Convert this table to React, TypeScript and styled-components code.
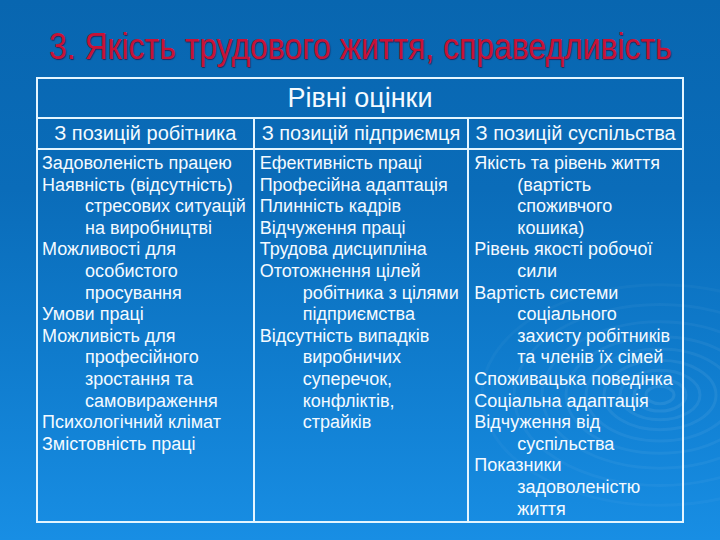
import React from 'react'
import styled, { createGlobalStyle } from 'styled-components'

const GlobalStyle = createGlobalStyle`
  html, body {
    margin: 0;
    padding: 0;
  }
  body {
    width: 720px;
    height: 540px;
    overflow: hidden;
    font-family: 'Liberation Sans', Arial, sans-serif;
  }
`

const Slide = styled.div`
  position: relative;
  width: 720px;
  height: 540px;
  display: flex;
  flex-direction: column;
  align-items: center;
  overflow: hidden;
  background: linear-gradient(180deg, #0866b0 0%, #0a6cb9 35%, #0f7bcc 65%, #188ee4 100%);
`

const Ripples = styled.svg`
  position: absolute;
  left: 0;
  top: 0;
  width: 720px;
  height: 540px;
  pointer-events: none;
`

// no narrow face is installed, so the title is squeezed to Arial Narrow's width
const Title = styled.h1`
  position: relative;
  margin: 29px 0 0;
  font-weight: normal;
  font-size: 36px;
  line-height: 36px;
  color: #c81236;
  text-shadow: 1px 1px 1px rgba(50, 0, 40, 0.6);
  white-space: nowrap;
  transform: scaleX(0.886);
`

const Table = styled.div`
  position: relative;
  box-sizing: border-box;
  width: 648px;
  height: 446px;
  margin-top: 12px;
  border: 2px solid #e4f5ff;
  display: grid;
  grid-template-columns: 1fr 1fr 1fr;
  grid-template-rows: 40px 31px 1fr;
  color: #f4faff;
`

const Caption = styled.div`
  grid-column: 1 / span 3;
  border-bottom: 2px solid #e4f5ff;
  text-align: center;
  font-size: 27px;
  line-height: 38px;
`

const HeadCell = styled.div<{ first?: boolean }>`
  border-bottom: 2px solid #e4f5ff;
  border-left: ${({ first }) => (first ? 'none' : '2px solid #e4f5ff')};
  text-align: center;
  font-size: 20px;
  line-height: 29px;
  white-space: nowrap;
`

const BodyCell = styled.div<{ first?: boolean }>`
  border-left: ${({ first }) => (first ? 'none' : '2px solid #e4f5ff')};
  padding: 3px 0 0 ${({ first }) => (first ? '4px' : '5px')};
  font-size: 18px;
  line-height: 21.6px;
`

const Line = styled.div<{ indent?: boolean }>`
  padding-left: ${({ indent }) => (indent ? '43px' : '0')};
  white-space: nowrap;
`

const COLUMNS: { title: string; items: string[][] }[] = [
  {
    title: 'З позицій робітника',
    items: [
      ['Задоволеність працею'],
      ['Наявність (відсутність)', 'стресових ситуацій', 'на виробництві'],
      ['Можливості для', 'особистого', 'просування'],
      ['Умови праці'],
      ['Можливість для', 'професійного', 'зростання та', 'самовираження'],
      ['Психологічний клімат'],
      ['Змістовність праці'],
    ],
  },
  {
    title: 'З позицій підприємця',
    items: [
      ['Ефективність праці'],
      ['Професійна адаптація'],
      ['Плинність кадрів'],
      ['Відчуження праці'],
      ['Трудова дисципліна'],
      ['Ототожнення цілей', 'робітника з цілями', 'підприємства'],
      ['Відсутність випадків', 'виробничих', 'суперечок,', 'конфліктів,', 'страйків'],
    ],
  },
  {
    title: 'З позицій суспільства',
    items: [
      ['Якість та рівень життя', '(вартість', 'споживчого', 'кошика)'],
      ['Рівень якості робочої', 'сили'],
      ['Вартість системи', 'соціального', 'захисту робітників', 'та членів їх сімей'],
      ['Споживацька поведінка'],
      ['Соціальна адаптація'],
      ['Відчуження від', 'суспільства'],
      ['Показники', 'задоволеністю', 'життя'],
    ],
  },
]

const RINGS = [14, 26, 40, 56, 74, 94, 118, 146, 178]

export default function App() {
  return (
    <>
      <GlobalStyle />
      <Slide>
        <Ripples viewBox="0 0 720 540">
          {RINGS.map((r, i) => (
            <ellipse
              key={r}
              cx={660}
              cy={395}
              rx={r}
              ry={r * 0.62}
              fill="none"
              stroke="#ffffff"
              strokeOpacity={0.08 - i * 0.006}
              strokeWidth={3}
            />
          ))}
        </Ripples>
        <Title>3. Якість трудового життя, справедливість</Title>
        <Table>
          <Caption>Рівні оцінки</Caption>
          {COLUMNS.map((col, i) => (
            <HeadCell key={col.title} first={i === 0}>
              {col.title}
            </HeadCell>
          ))}
          {COLUMNS.map((col, i) => (
            <BodyCell key={col.title} first={i === 0}>
              {col.items.map((item) =>
                item.map((text, j) => (
                  <Line key={text} indent={j > 0}>
                    {text}
                  </Line>
                ))
              )}
            </BodyCell>
          ))}
        </Table>
      </Slide>
    </>
  )
}
